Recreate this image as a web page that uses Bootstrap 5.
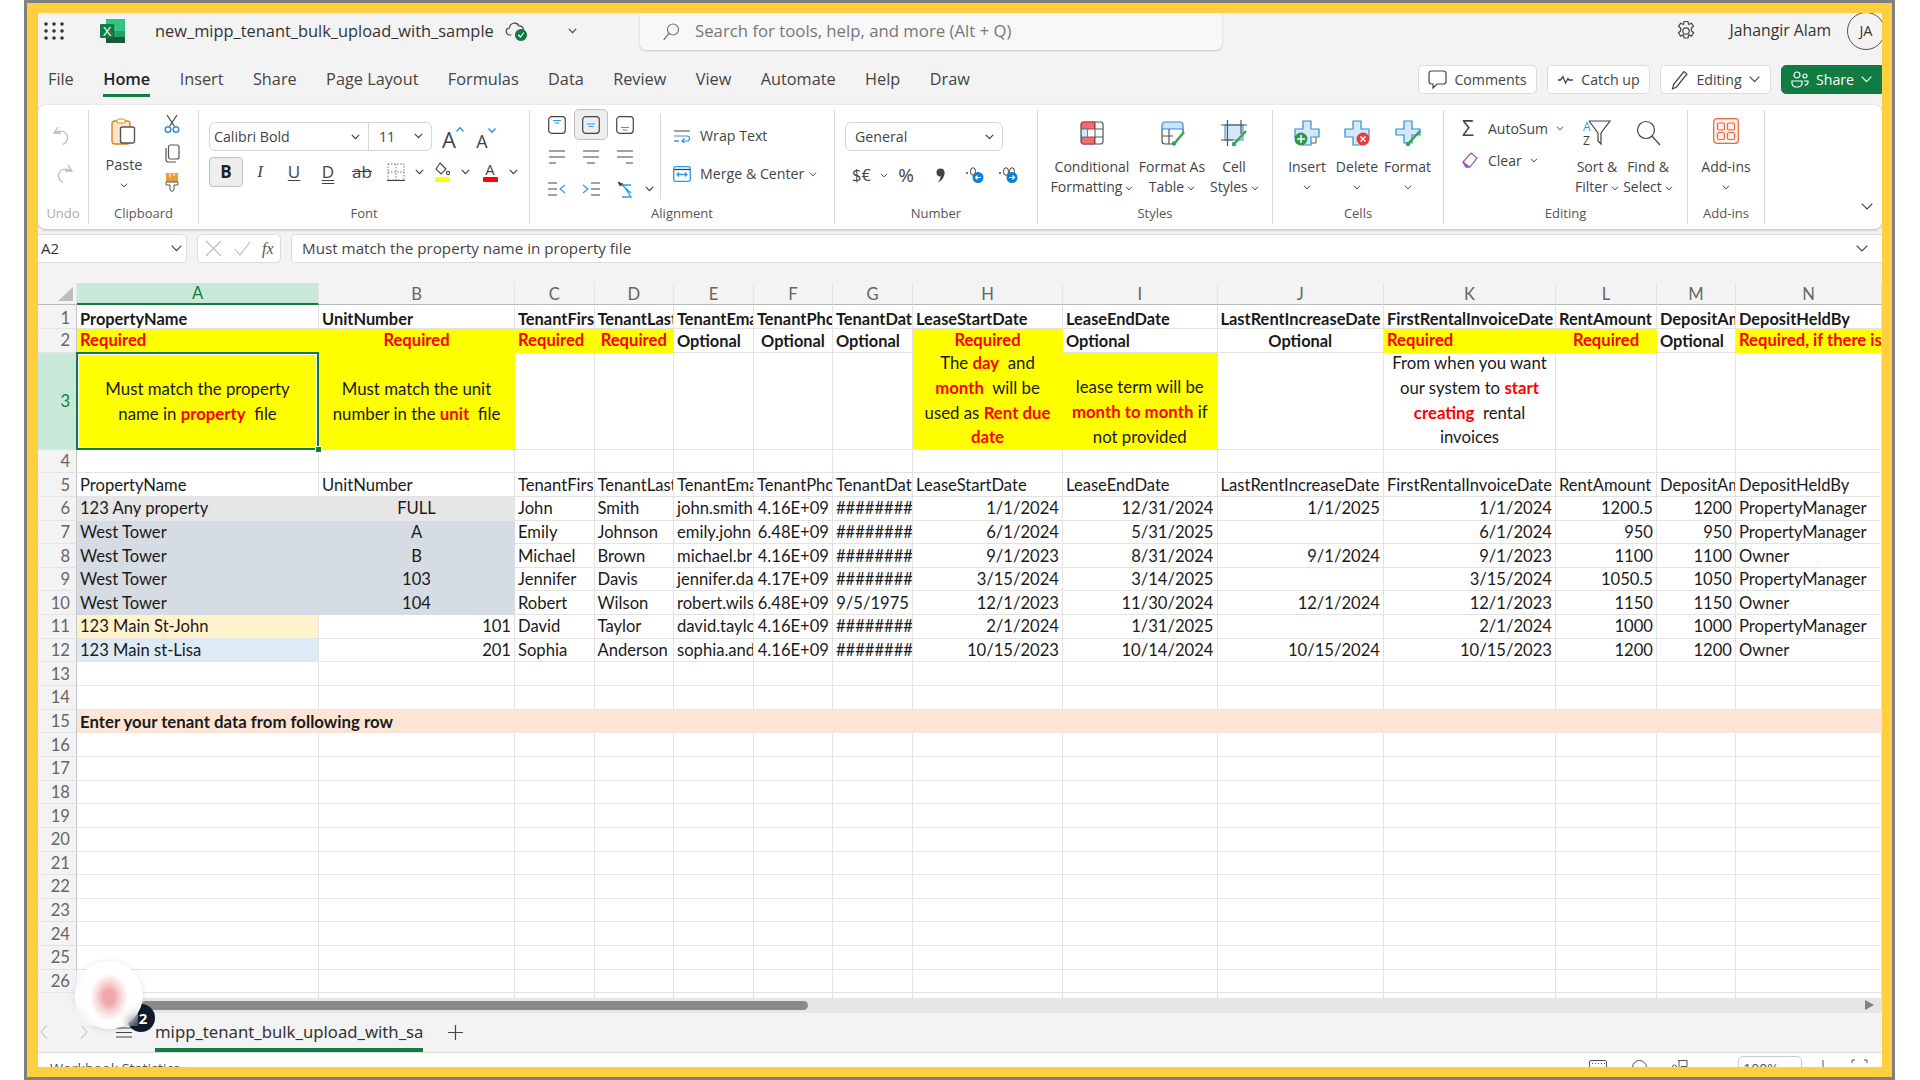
<!DOCTYPE html>
<html lang="en">
<head>
<meta charset="utf-8">
<title>new_mipp_tenant_bulk_upload_with_sample</title>
<link href="https://cdn.jsdelivr.net/npm/bootstrap@5.3.0/dist/css/bootstrap.min.css" rel="stylesheet">
<style>
html,body{margin:0;background:#fff;height:1080px;overflow:hidden}
body{font-family:"Open Sans","Noto Sans",sans-serif;color:#333;font-size:14px}
.shot{margin-left:24px;width:1871px;height:1080px;border:3px solid #808080;border-bottom-width:3px}
.frame{height:100%;border:10px solid #ffcf3f;border-left-width:11px;border-right-width:10px;overflow:hidden;position:relative;background:#f3f3f3}
svg{display:block;flex:none;overflow:visible}
.st{fill:none;stroke:#444;stroke-width:1.2;stroke-linecap:round;stroke-linejoin:round}
.chev{width:9px;height:6px;fill:none;stroke:#444;stroke-width:1.2}
/* title bar */
.titlebar{height:39px;padding-bottom:3px}
.waffle{width:20px;height:18px;margin-left:6px;margin-right:36px}
.doc-title{font-size:16.4px;margin-left:30px;color:#333;white-space:nowrap;width:351px}
.searchbox{margin-left:63px;width:582px;height:37px;background:#f8f8f8;border-radius:0 0 6px 6px;box-shadow:0 1px 2px rgba(0,0,0,.2);padding-left:22px;color:#777;font-size:16.75px;gap:14px}
.user{margin-left:auto;gap:0}
.user-name{font-size:15.75px;margin-left:33px;margin-right:16px;white-space:nowrap}
.avatar{width:38px;height:38px;border:1px solid #555;border-radius:50%;margin-right:-3px;font-size:14.5px}
/* tabs */
.tabrow{height:53px;padding-top:13px}
.tabs{gap:29.4px;margin-left:10px}
.tabs span{display:block;height:32px;line-height:29px;font-size:16.3px;color:#444;border-bottom:3px solid transparent;white-space:nowrap}
.tabs span.on{color:#222;font-weight:600;border-color:#107c41}
.act{height:29px;background:#fff;border:1px solid #dcdcdc;border-radius:5px;font-size:14.2px;color:#444;gap:7px;padding:0;margin-left:10px}
.act svg{stroke:#444}
.w1{width:119px}.w2{width:103px}.w3{width:111px}.w4{width:101px;background:#107c41;border-color:#107c41;color:#fff;border-radius:5px 0 0 5px}
.w4 svg{stroke:#fff}
/* ribbon */
.ribbon{height:124px;background:#fff;border-radius:8px;box-shadow:0 1px 3px rgba(0,0,0,.25);padding:5px 0}
.grp{height:114px;border-right:1px solid #dadada;flex:none}
.g1{width:51px}.g2{width:110px}.g3{width:331px}.g4{width:305px}.g5{width:203px}.g6{width:235px}.g7{width:171px}.g8{width:244px}.g9{width:77px}
.gbody{height:92px}
.g3 .gbody,.g4 .gbody,.g5 .gbody{padding-left:10px}
.g6 .gbody{padding-left:12px}
.g7 .gbody{padding-left:9px}
.g8 .gbody{padding-left:18px}
.glabel{height:22px;line-height:22px;text-align:center;font-size:13px;color:#555}
.big{flex:none;font-size:14px;line-height:20px;text-align:center;color:#444;padding-top:10px;white-space:nowrap}
.big svg.main{margin:0 auto 11px;width:28px;height:26px}
.big .chev{display:inline-block;width:8px;height:5px;margin-left:3px;vertical-align:middle}
.big .chev.solo{display:block;margin:8px auto 0}
.combo{height:29px;border:1px solid #d6d6d6;border-radius:6px;background:#fff;font-size:14.2px;color:#444}
.fontcombo{width:223px;margin-top:12px}
.fontcombo .fn{width:159px;padding:0 8px 0 4px;border-right:1px solid #d6d6d6;height:100%}
.fontcombo .fs{flex:1;padding:0 8px 0 10px}
.numcombo{width:158px;margin-top:12px;padding:0 8px 0 9px}
.tb{width:34px;height:30px;font-size:17px;color:#444;flex:none}
.tb.on{background:#eee;border:1px solid #c0c0c0;border-radius:4px;font-weight:700;color:#222}
.t12{width:12px}.t30{width:30px;margin-left:3px}.t14{width:14px}.t36{width:36px}.t10{width:10px}
.i{font-style:italic;font-family:"Liberation Serif",serif}
.u{text-decoration:underline;text-underline-offset:2px}
.dbl{text-decoration:underline double;text-underline-offset:2px}
.s{text-decoration:line-through}
.sized{height:29px;font-size:22px;color:#444;line-height:1;margin-top:11px}
.s1{width:34px}
.s2{width:32px;font-size:18px}
.al{display:grid;grid-template-columns:34px 34px 34px 14px;grid-auto-rows:32px;margin-top:-1px;width:116px;align-content:start}
.al>div{display:flex;align-items:center;justify-content:center}
.al .on{background:#eee;border:1px solid #c0c0c0;border-radius:5px;height:31px}
.vsep{width:1px;height:85px;background:#dadada;margin:4px 12px 0 4px;flex:none}
.wrap-col{font-size:14.2px;color:#444;padding-top:14px;gap:14px}
.wrap-col>div{height:24px;gap:9px}
.numrow{height:24px;margin-top:12px;margin-left:3px;font-size:16.5px;color:#444}
.numrow>div{display:flex;align-items:center;justify-content:center;flex:none}
.small-col{width:109px;padding-top:6px;gap:8px;font-size:14px;color:#444}
.small-col>div{height:24px}
.small-col .sic{width:26px;font-size:21px;line-height:1}
.expand{margin-left:auto;align-self:flex-end;margin-right:9px;margin-bottom:14px}
/* formula */
.fxrow{height:29px;margin-top:5px;gap:10px}
.namebox{width:149px;background:#fff;border:1px solid #dcdcdc;border-radius:0 5px 5px 0;padding:0 4px 0 3px;font-size:15px;border-left:0}
.fnbox{width:84px;background:#fff;border:1px solid #dcdcdc;border-radius:5px;color:#999;font-family:"Liberation Serif",serif;font-style:italic;font-size:16px;gap:12px;padding-left:7px}
.fbar{flex:1;background:#fff;border:1px solid #dcdcdc;border-right:0;padding:0 10px;font-size:15.2px;color:#444;border-radius:5px 0 0 5px}
.gap20{height:20px}
/* sheet */
.sheet{width:1844px;table-layout:fixed;border-collapse:separate;border-spacing:0;margin:0;--bs-table-bg:#fff;font-family:Lato,"Liberation Sans",sans-serif;font-size:16.6px;color:#1a1a1a}
.sheet col:nth-child(1){width:39px}.sheet col:nth-child(2){width:242px}.sheet col:nth-child(3){width:196px}.sheet col:nth-child(4){width:79.5px}.sheet col:nth-child(5){width:79.5px}.sheet col:nth-child(6){width:80px}.sheet col:nth-child(7){width:79px}.sheet col:nth-child(8){width:80px}.sheet col:nth-child(9){width:150px}.sheet col:nth-child(10){width:154.5px}.sheet col:nth-child(11){width:166.5px}.sheet col:nth-child(12){width:172px}.sheet col:nth-child(13){width:101px}.sheet col:nth-child(14){width:79px}.sheet col:nth-child(15){width:146px}
.sheet tr{height:23.65px}
.sheet tr.hdr{height:22px}
.sheet tr.r1{height:24px}
.sheet td,.sheet th{padding:1px 3px 0;line-height:19px;border:0;border-right:1px solid #e3e3e3;border-bottom:1px solid #e3e3e3;overflow:hidden;white-space:nowrap;vertical-align:middle;font-weight:400}
.sheet tr.r1 td,.sheet tr.r1 th{padding-top:3px}
.sheet tr.r3{height:96.6px}
.sheet tr.r27{height:4.5px}
.sheet thead th{background:#f3f3f3;color:#666;text-align:center;border-bottom:1px solid #b9b9b9;border-right:1px solid #e3e3e3}
.sheet thead th.sel{background:#c9e9d8;color:#107c41;border-bottom:2px solid #107c41}
.sheet tbody th{background:#f3f3f3;color:#666;text-align:right;padding-right:6px;border-right:1px solid #c6c6c6}
.sheet tbody th.sel{background:#c9e9d8;color:#107c41}
.sheet tr.r27 th,.sheet tr.r27 td{line-height:0;border-bottom:0;padding:0}
.sheet td.y{background:#ff0;border-color:#ff0}
.sheet td.g{background:#e6e6e6;border-color:#e6e6e6}
.sheet td.b{background:#d6dce4;border-color:#d6dce4}
.sheet td.o{background:#fff2cc}
.sheet td.l{background:#ddebf7}
.sheet td.p{background:#fce4d6;border-color:#fce4d6;font-size:16.8px}
.sheet .rq{color:#f00;font-weight:700}
.sheet .bd{font-weight:700;font-size:16.4px}
.sheet td.tallc{padding:0;overflow:visible}
.tall{height:96px;line-height:24.8px;overflow:hidden;white-space:nowrap;text-align:center;padding:0 3px;font-size:16.8px}
.lower>span{padding-top:2px}
.lowest>span{margin-bottom:-1px}
.sheet td.sel{position:relative;overflow:visible}
.selbox{position:absolute;inset:-1px -1px -1px -1px;border:2px solid #107c41;box-shadow:inset 0 0 0 1px #fff;pointer-events:none}
.handle{position:absolute;right:-4px;bottom:-4px;width:7px;height:7px;background:#107c41;border:1px solid #fff}
/* bottom */
.hscroll{height:15px}
.hscroll .corner{width:39px;background:#f3f3f3}
.hscroll .track{flex:1;background:#e6e6e6;padding:3px 8px 3px 64px}
.thumb{width:667px;height:9px;background:#8a8a8a;border-radius:5px}
.sheetbar{height:40px;background:#f3f3f3;border-bottom:1px solid #ddd;padding-left:2px}
.sheettab{margin-left:23px;height:40px;width:268px;border-bottom:4px solid #107c41;line-height:40px;font-family:"Noto Sans",sans-serif;font-size:16.7px;color:#333;white-space:nowrap;overflow:hidden;text-align:center}
.status{height:32px;background:#fff;font-size:14.2px;color:#555;padding-left:12px;padding-top:5px}
.status svg{margin-top:2px}
.zoombox{width:64px;height:26px;border:1px solid #ccc;border-radius:5px;font-size:14px;margin-top:-2px}
.avatarblur{position:absolute;left:37px;top:948px;width:68px;height:68px;border-radius:50%;background:#fff;opacity:.97;box-shadow:0 1px 6px rgba(0,0,0,.12)}
.badge2{position:absolute;left:89px;top:991px;width:28px;height:28px;border-radius:50%;background:#0f1a2c;color:#fff;font-weight:700;font-size:15px;padding:0 0 0 4px}
.blursq{position:absolute;left:37px;top:958px;width:63px;height:55px;backdrop-filter:blur(5px);background:rgba(255,255,255,.2)}
.pink{position:absolute;left:52px;top:960px;width:38px;height:48px;border-radius:50%;background:radial-gradient(closest-side,#efa9ab 30%,rgba(240,180,182,.5) 65%,rgba(255,255,255,0))}
</style>
</head>
<body>
<svg width="0" height="0" style="position:absolute">
<symbol id="chev" viewBox="0 0 9 6"><path d="M.8.8l3.7 3.9L8.2.8"/></symbol>
</svg>
<div class="shot"><div class="frame">

<div class="titlebar d-flex align-items-center">
  <svg class="waffle" viewBox="0 0 20 18" fill="#333"><circle cx="2" cy="2" r="1.8"/><circle cx="10" cy="2" r="1.8"/><circle cx="18" cy="2" r="1.8"/><circle cx="2" cy="9" r="1.8"/><circle cx="10" cy="9" r="1.8"/><circle cx="18" cy="9" r="1.8"/><circle cx="2" cy="16" r="1.8"/><circle cx="10" cy="16" r="1.8"/><circle cx="18" cy="16" r="1.8"/></svg>
  <svg width="25" height="24" viewBox="0 0 25 24"><rect x="6" y="0" width="19" height="6" fill="#33c481"/><rect x="6" y="6" width="9.500" height="6" fill="#21a366"/><rect x="15.500" y="6" width="9.500" height="6" fill="#33c481"/><rect x="6" y="12" width="9.500" height="6" fill="#107c41"/><rect x="15.500" y="12" width="9.500" height="6" fill="#21a366"/><rect x="6" y="18" width="19" height="6" fill="#185c37"/><rect x="0" y="5" width="14" height="14" rx="1" fill="#107c41"/><text x="7" y="16.500" text-anchor="middle" font-family="Liberation Sans" font-size="13" fill="#fff">X</text></svg>
  <div class="doc-title">new_mipp_tenant_bulk_upload_with_sample</div>
  <svg width="22" height="20" viewBox="0 0 22 20" class="st"><path d="M5 14H4a3.500 3.500 0 0 1-.5-7 5 5 0 0 1 9.500-2 4 4 0 0 1 4.500 4"/><circle cx="15" cy="14" r="5.500" fill="#107c41" stroke="#107c41"/><path d="M12.500 14l2 2 3-4" stroke="#fff"/></svg>
  <svg class="chev" viewBox="0 0 9 6" style="margin-left:40px"><use href="#chev"/></svg>
  <div class="searchbox d-flex align-items-center">
    <svg width="19" height="17" viewBox="0 0 19 17" class="st"><circle cx="11" cy="6.500" r="5.500" stroke="#777"/><path d="M7 10.500l-5 6" stroke="#777"/></svg>
    <span>Search for tools, help, and more (Alt + Q)</span>
  </div>
  <div class="user d-flex align-items-center">
    <svg width="22" height="22" viewBox="0 0 22 22" class="st"><circle cx="11" cy="11" r="3.200"/><path d="M9 1.500h4l.6 3 2.700-1.300 2.200 3-2.200 2 .1 2.600 2.200 2-2.100 3.300-2.800-1.200-.7 3.100H9l-.6-3.100-2.800 1.200-2.100-3.300 2.200-2 .1-2.600-2.200-2 2.200-3 2.700 1.300z"/></svg>
    <span class="user-name">Jahangir Alam</span>
    <div class="avatar d-flex align-items-center justify-content-center">JA</div>
  </div>
</div>

<div class="tabrow d-flex align-items-start">
  <div class="tabs d-flex">
    <span>File</span><span class="on">Home</span><span>Insert</span><span>Share</span><span>Page Layout</span><span>Formulas</span><span>Data</span><span>Review</span><span>View</span><span>Automate</span><span>Help</span><span>Draw</span>
  </div>
  <div class="ms-auto d-flex">
    <button class="btn act w1 d-flex align-items-center justify-content-center"><svg width="19" height="19" viewBox="0 0 19 19" fill="none" stroke-width="1.2"><path d="M3.500 1h12a2.500 2.500 0 0 1 2.500 2.500v8a2.500 2.500 0 0 1-2.500 2.500H9l-4 4v-4H3.500A2.500 2.500 0 0 1 1 11.500v-8A2.500 2.500 0 0 1 3.500 1z"/></svg>Comments</button>
    <button class="btn act w2 d-flex align-items-center justify-content-center"><svg width="17" height="10" viewBox="0 0 17 10" fill="none" stroke-width="1.300"><path d="M1 5h2.500L6 1.500 8.500 8 11 3.500l1 1.500h4"/></svg>Catch up</button>
    <button class="btn act w3 d-flex align-items-center justify-content-center"><svg width="18" height="20" viewBox="0 0 18 20" fill="none" stroke-width="1.200"><path d="M2.500 14.500L13 1.500l3 2.500L5.500 17 1.500 19z"/></svg>Editing<svg width="11" height="7" viewBox="0 0 11 7" fill="none" stroke-width="1.200"><path d="M.7.7l4.800 5 4.800-5"/></svg></button>
    <button class="btn act w4 d-flex align-items-center justify-content-center"><svg width="18" height="17" viewBox="0 0 18 17" fill="none" stroke-width="1.200"><circle cx="6" cy="4" r="3"/><circle cx="14" cy="5" r="2"/><path d="M1 10h10v2a4 4 0 0 1-4 4H5a4 4 0 0 1-4-4zM13 10h4v1a3 3 0 0 1-3.500 3"/></svg>Share<svg width="11" height="7" viewBox="0 0 11 7" fill="none" stroke-width="1.200"><path d="M.7.7l4.800 5 4.800-5"/></svg></button>
  </div>
</div>

<div class="ribbon d-flex">
  <div class="grp g1 d-flex flex-column">
    <div class="gbody d-flex flex-column align-items-center" >
      <svg width="22" height="20" viewBox="0 0 22 20" fill="none" stroke="#bbb" stroke-width="1.300" style="margin-top:16px"><path d="M6 1L2 7l7 0M2.500 7c5-3.500 13-2 13 4.500 0 3-2 5.500-4.500 7"/></svg>
      <svg width="22" height="20" viewBox="0 0 22 20" fill="none" stroke="#bbb" stroke-width="1.300" style="margin-top:18px"><path d="M16 1l4 6-7 0M19.500 7c-5-3.500-13-2-13 4.500 0 3 2 5.500 4.500 7"/></svg>
    </div>
    <div class="glabel" style="color:#aaa">Undo</div>
  </div>
  <div class="grp g2 d-flex flex-column">
    <div class="gbody d-flex">
      <div class="big" style="width:70px;padding-top:8px">
        <svg class="main" style="width:26px;height:27px;margin-bottom:10px" viewBox="0 0 26 27" fill="none"><rect x="1" y="3" width="18" height="23" rx="3" fill="#fde5c8" stroke="#d9822b" stroke-width="1.400"/><rect x="6" y="1" width="8" height="4" rx="1.500" fill="#fff" stroke="#d9822b"/><rect x="9.500" y="9" width="14" height="16" rx="2" fill="#fff" stroke="#555" stroke-width="1.400"/></svg>
        <div style="font-size:14.5px">Paste</div>
        <svg class="chev solo" viewBox="0 0 9 6"><use href="#chev"/></svg>
      </div>
      <div class="d-flex flex-column align-items-center" style="width:24px;padding-top:5px;margin-left:1px;gap:11px">
        <svg width="16" height="18" viewBox="0 0 16 18" fill="none" stroke-width="1.200"><path d="M3 0l7.500 11.500M13 0L5.500 11.500" stroke="#444"/><circle cx="4" cy="14.500" r="2.800" stroke="#2e8fd6" stroke-width="1.500"/><circle cx="12" cy="14.500" r="2.800" stroke="#2e8fd6" stroke-width="1.500"/></svg>
        <svg width="15" height="19" viewBox="0 0 15 19" fill="none" stroke="#555" stroke-width="1.200"><rect x="3.500" y="1" width="10.500" height="14" rx="2"/><path d="M1 4v11.500A2.500 2.500 0 0 0 3.500 18H11"/></svg>
        <svg width="14" height="20" viewBox="0 0 14 20" style="margin-top:-2px"><path d="M1 1h12v9H1z" fill="#ed9a3b"/><path d="M5 1v4M9 1v3" stroke="#fff"/><path d="M1 10h12v3H9v5l-2 1.500L5 18v-5H1z" fill="#fff" stroke="#555"/></svg>
      </div>
    </div>
    <div class="glabel">Clipboard</div>
  </div>
  <div class="grp g3 d-flex flex-column">
    <div class="gbody">
      <div class="d-flex">
        <div class="combo fontcombo d-flex align-items-center">
          <div class="fn d-flex align-items-center justify-content-between">Calibri Bold<svg class="chev" viewBox="0 0 9 6"><use href="#chev"/></svg></div>
          <div class="fs d-flex align-items-center justify-content-between">11<svg class="chev" viewBox="0 0 9 6"><use href="#chev"/></svg></div>
        </div>
        <div class="sized s1 d-flex align-items-end justify-content-center">A<svg width="8" height="5" viewBox="0 0 8 5" fill="none" stroke="#2e8fd6" stroke-width="1.300" style="margin:0 -8px 18px 0"><path d="M.5 4.500L4 .8l3.500 3.700"/></svg></div>
        <div class="sized s2 d-flex align-items-end justify-content-center">A<svg width="8" height="5" viewBox="0 0 8 5" fill="none" stroke="#2e8fd6" stroke-width="1.300" style="margin:0 -8px 17px 0"><path d="M.5.500L4 4.200 7.500.500"/></svg></div>
      </div>
      <div class="d-flex align-items-center" style="margin-top:6px">
        <div class="tb on d-flex align-items-center justify-content-center">B</div>
        <div class="tb d-flex align-items-center justify-content-center"><span class="i">I</span></div>
        <div class="tb d-flex align-items-center justify-content-center"><span class="u">U</span></div>
        <div class="tb d-flex align-items-center justify-content-center"><span class="dbl">D</span></div>
        <div class="tb d-flex align-items-center justify-content-center"><span class="s">ab</span></div>
        <div class="tb d-flex align-items-center justify-content-center"><svg width="18" height="18" viewBox="0 0 18 18" fill="none" stroke="#777" stroke-dasharray="1.500 1.500"><path d="M1 1h16v16H1zM9 1v16M1 9h16"/><path d="M0 17.500h18" stroke="#444" stroke-dasharray="none"/></svg></div>
        <div class="tb t12 d-flex align-items-center justify-content-center"><svg class="chev" viewBox="0 0 9 6"><use href="#chev"/></svg></div>
        <div class="tb t30 d-flex align-items-center justify-content-center"><svg width="18" height="20" viewBox="0 0 18 20" fill="none" stroke="#444" stroke-width="1.100"><path d="M6 1l6 6-5 5-5-5z"/><circle cx="14" cy="11" r="1.600"/><rect x="1" y="15" width="15" height="5" rx="1.500" fill="#ff0" stroke="none"/></svg></div>
        <div class="tb t14 d-flex align-items-center justify-content-center"><svg class="chev" viewBox="0 0 9 6"><use href="#chev"/></svg></div>
        <div class="tb t36 d-flex flex-column align-items-center justify-content-center" style="font-size:15px;line-height:15px">A<div style="width:15px;height:5px;background:#f00;border-radius:1px"></div></div>
        <div class="tb t10 d-flex align-items-center justify-content-center"><svg class="chev" viewBox="0 0 9 6"><use href="#chev"/></svg></div>
      </div>
    </div>
    <div class="glabel">Font</div>
  </div>
  <div class="grp g4 d-flex flex-column">
    <div class="gbody d-flex">
      <div class="al">
        <div><svg width="18" height="18" viewBox="0 0 18 18" fill="none" stroke="#444" stroke-width="1.200"><rect x=".7" y=".7" width="16.600" height="16.600" rx="3"/><path d="M5 4.500h8M6.500 7h5" stroke="#2e9be0"/></svg></div>
        <div class="on"><svg width="18" height="18" viewBox="0 0 18 18" fill="none" stroke="#444" stroke-width="1.200"><rect x=".7" y=".7" width="16.600" height="16.600" rx="3"/><path d="M5 8h8M6.500 10.500h5" stroke="#2e9be0"/></svg></div>
        <div><svg width="18" height="18" viewBox="0 0 18 18" fill="none" stroke="#444" stroke-width="1.200"><rect x=".7" y=".7" width="16.600" height="16.600" rx="3"/><path d="M5 11.500h8M6.500 14h5" stroke="#2e9be0"/></svg></div>
        <div></div>
        <div><svg width="16" height="14" viewBox="0 0 16 14" stroke="#444" stroke-width="1.200"><path d="M0 1h16M0 7h16M0 13h7"/></svg></div>
        <div><svg width="16" height="14" viewBox="0 0 16 14" stroke="#444" stroke-width="1.200"><path d="M0 1h16M0 7h16M4 13h8"/></svg></div>
        <div><svg width="16" height="14" viewBox="0 0 16 14" stroke="#444" stroke-width="1.200"><path d="M0 1h16M0 7h16M9 13h7"/></svg></div>
        <div></div>
        <div><svg width="18" height="14" viewBox="0 0 18 14" fill="none" stroke="#444" stroke-width="1.200"><path d="M0 1h9M0 7h9M0 13h9"/><path d="M17 3l-5 4 5 4" stroke="#2e9be0"/></svg></div>
        <div><svg width="18" height="14" viewBox="0 0 18 14" fill="none" stroke="#444" stroke-width="1.200"><path d="M9 1h9M9 7h9M9 13h9"/><path d="M1 3l5 4-5 4" stroke="#2e9be0"/></svg></div>
        <div><svg width="16" height="17" viewBox="0 0 16 17" fill="none" stroke="#2e9be0" stroke-width="1.300"><path d="M5 4l9 8M14 4l-8 0 8 12H5"/><path d="M1 1l5 2-3 2z" fill="#444" stroke="#444" stroke-width=".8"/></svg></div>
        <div><svg class="chev" viewBox="0 0 9 6"><use href="#chev"/></svg></div>
      </div>
      <div class="vsep"></div>
      <div class="wrap-col d-flex flex-column">
        <div class="d-flex align-items-center"><svg width="18" height="13" viewBox="0 0 16 13" fill="none" stroke-width="1.200"><path d="M0 1h16M0 11h5" stroke="#444"/><path d="M0 6h13a2.500 2.500 0 0 1 0 5H8m2.500-2.500L8 11l2.500 2" stroke="#2e9be0"/></svg>Wrap Text</div>
        <div class="d-flex align-items-center"><svg width="18" height="16" viewBox="0 0 18 16" fill="none" stroke-width="1.300"><rect x=".7" y=".7" width="16.600" height="14.600" rx="2" stroke="#2e9be0"/><path d="M1 3.500h16" stroke="#444"/><path d="M4 8.500h10M6 6.500l-2 2 2 2M12 6.500l2 2-2 2" stroke="#2e9be0"/></svg>Merge &amp; Center<svg class="chev" style="width:8px;height:5px;margin-left:-4px" viewBox="0 0 9 6"><use href="#chev"/></svg></div>
      </div>
    </div>
    <div class="glabel">Alignment</div>
  </div>
  <div class="grp g5 d-flex flex-column">
    <div class="gbody">
      <div class="combo numcombo d-flex align-items-center justify-content-between">General<svg class="chev" viewBox="0 0 9 6"><use href="#chev"/></svg></div>
      <div class="numrow d-flex">
        <div style="width:27px">$€</div>
        <div style="width:17px"><svg class="chev" style="width:8px;height:5px" viewBox="0 0 9 6"><use href="#chev"/></svg></div>
        <div style="width:28px;font-size:19px">%</div>
        <div style="width:40px"><svg width="9" height="15" viewBox="0 0 9 15" fill="#444"><circle cx="4.500" cy="4.500" r="4"/><path d="M8.500 4.500C8.500 9 6 13 1.500 14.500 4 12 4.500 10 4.500 8.500z"/></svg></div>
        <div style="width:30px"><svg width="19" height="16" viewBox="0 0 19 16"><circle cx="1" cy="6" r="1" fill="#444"/><ellipse cx="7" cy="4.500" rx="2.500" ry="3.800" fill="none" stroke="#444"/><circle cx="12" cy="10.500" r="5.500" fill="#0f7fcf"/><path d="M15 10.500H9.500m2-2l-2 2 2 2" fill="none" stroke="#fff" stroke-width="1.200"/></svg></div>
        <div style="width:38px"><svg width="20" height="16" viewBox="0 0 20 16"><circle cx="1" cy="6" r="1" fill="#444"/><ellipse cx="7" cy="4.500" rx="2.500" ry="3.800" fill="none" stroke="#444"/><ellipse cx="13" cy="4.500" rx="2.500" ry="3.800" fill="none" stroke="#444"/><circle cx="13" cy="10.500" r="5.500" fill="#0f7fcf"/><path d="M10 10.500h5.500m-2-2l2 2-2 2" fill="none" stroke="#fff" stroke-width="1.200"/></svg></div>
      </div>
    </div>
    <div class="glabel">Number</div>
  </div>
  <div class="grp g6 d-flex flex-column">
    <div class="gbody d-flex">
      <div class="big" style="width:84px">
        <svg class="main" viewBox="0 0 28 26" fill="none"><rect x="3" y="2" width="22" height="22" rx="2.500" stroke="#555" stroke-width="1.200"/><path d="M5.500 2h11v7h-13V4.500A2.500 2.500 0 0 1 5.500 2z" fill="#f26d6d" stroke="#c8373a"/><path d="M3.500 17h13v7h-11a2.500 2.500 0 0 1-2-2.500z" fill="#f26d6d" stroke="#c8373a"/><rect x="3.500" y="9" width="6" height="8" fill="#d5e8f8" stroke="#2e8fd6"/><path d="M17 2v22M17 9h8M17 17h8" stroke="#555"/></svg>
        Conditional<br>Formatting<svg class="chev" viewBox="0 0 9 6"><use href="#chev"/></svg>
      </div>
      <div class="big" style="width:76px">
        <svg class="main" viewBox="0 0 28 26" fill="none"><path d="M4 8V5a3 3 0 0 1 3-3h15a3 3 0 0 1 3 3v4H4z" fill="#cde3f6" stroke="#2e8fd6" stroke-width="1.200"/><path d="M4 9v12a3 3 0 0 0 3 3h8M11 9v15M4 16h11M25 9v3" stroke="#555" stroke-width="1.200"/><path d="M16 24l10-12" stroke="#2fa84f" stroke-width="2.500"/><circle cx="16" cy="23.500" r="2.200" fill="#2fa84f"/></svg>
        Format As<br>Table<svg class="chev" viewBox="0 0 9 6"><use href="#chev"/></svg>
      </div>
      <div class="big" style="width:48px">
        <svg class="main" viewBox="0 0 28 26" fill="none"><rect x="5" y="5" width="18" height="15" fill="#d5e8f8" stroke="#2e8fd6"/><path d="M7.500 0v26M21 0v14M1 5h26M1 20h12" stroke="#555" stroke-width="1.200"/><path d="M14 24l12-13" stroke="#2fa84f" stroke-width="2.500"/><circle cx="14" cy="24" r="2.200" fill="#2fa84f"/></svg>
        Cell<br>Styles<svg class="chev" viewBox="0 0 9 6"><use href="#chev"/></svg>
      </div>
    </div>
    <div class="glabel">Styles</div>
  </div>
  <div class="grp g7 d-flex flex-column">
    <div class="gbody d-flex">
      <div class="big" style="width:50px">
        <svg class="main" viewBox="0 0 28 26" fill="none"><path d="M3 14v9h20v-9" stroke="#555"/><path d="M10 1h8v8h8v8h-8v8h-8v-8H2V9h8z" fill="#d5e8f8" stroke="#2e8fd6" stroke-width="1.200"/><circle cx="8" cy="19" r="6.500" fill="#2b9a4e"/><path d="M8 15v8M4 19h8" stroke="#fff" stroke-width="1.500"/></svg>
        Insert<svg class="chev solo" viewBox="0 0 9 6"><use href="#chev"/></svg>
      </div>
      <div class="big" style="width:50px">
        <svg class="main" viewBox="0 0 28 26" fill="none"><path d="M10 1h8v8h8v8h-8v8h-8v-8H2V9h8z" fill="#d5e8f8" stroke="#2e8fd6" stroke-width="1.200"/><circle cx="20" cy="19" r="6.500" fill="#e83c3c"/><path d="M17.500 16.500l5 5m0-5l-5 5" stroke="#fff" stroke-width="1.400"/></svg>
        Delete<svg class="chev solo" viewBox="0 0 9 6"><use href="#chev"/></svg>
      </div>
      <div class="big" style="width:51px">
        <svg class="main" viewBox="0 0 28 26" fill="none"><path d="M10 1h8v8h8v6H18v8h-8v-8H2V9h8z" fill="#d5e8f8" stroke="#2e8fd6" stroke-width="1.200"/><path d="M14 24l12-13" stroke="#2fa84f" stroke-width="2.500"/><circle cx="14" cy="24" r="2.200" fill="#2fa84f"/></svg>
        Format<svg class="chev solo" viewBox="0 0 9 6"><use href="#chev"/></svg>
      </div>
    </div>
    <div class="glabel">Cells</div>
  </div>
  <div class="grp g8 d-flex flex-column">
    <div class="gbody d-flex">
      <div class="small-col d-flex flex-column">
        <div class="d-flex align-items-center"><span class="sic">Σ</span>AutoSum<svg class="chev ms-2" style="width:8px;height:5px" viewBox="0 0 9 6"><use href="#chev"/></svg></div>
        <div class="d-flex align-items-center"><span class="sic"><svg width="16" height="16" viewBox="0 0 16 16" fill="none" stroke="#9c4fb5" stroke-width="1.200"><path d="M1 10l8-9 6 5-7 9H4z"/><path d="M1 10l6 5" /><path d="M1.500 10.500L5 14l3 1H4z" fill="#c57bd8"/></svg></span>Clear<svg class="chev ms-2" style="width:8px;height:5px" viewBox="0 0 9 6"><use href="#chev"/></svg></div>
      </div>
      <div class="big" style="width:52px">
        <svg class="main" style="width:28px;height:26px" viewBox="0 0 28 26" fill="none"><text x="0" y="11" font-size="12" font-family="Open Sans" fill="#2e9be0">A</text><text x="0" y="25" font-size="12" font-family="Open Sans" fill="#444">Z</text><path d="M6 1h21L18 13v11l-3-3v-8L6 1" stroke="#444" stroke-width="1.200"/></svg>
        Sort &amp;<br>Filter<svg class="chev" viewBox="0 0 9 6"><use href="#chev"/></svg>
      </div>
      <div class="big" style="width:50px">
        <svg class="main" viewBox="0 0 28 26" fill="none" stroke="#444" stroke-width="1.200"><circle cx="12" cy="10" r="8.500"/><path d="M18 16l8 9"/></svg>
        Find &amp;<br>Select<svg class="chev" viewBox="0 0 9 6"><use href="#chev"/></svg>
      </div>
    </div>
    <div class="glabel">Editing</div>
  </div>
  <div class="grp g9 d-flex flex-column">
    <div class="gbody d-flex justify-content-center">
      <div class="big" style="padding-top:8px">
        <svg class="main" style="width:26px;height:26px;margin-bottom:13px" viewBox="0 0 26 26" fill="none" stroke="#e8663c" stroke-width="1.200"><rect x=".7" y=".7" width="24.600" height="24.600" rx="3" fill="#fdf0ea"/><rect x="4.500" y="5" width="7" height="7" rx="1.500"/><rect x="14.500" y="5" width="7" height="7" rx="1.500"/><rect x="4.500" y="14.500" width="7" height="7" rx="1.500"/><rect x="14.500" y="14.500" width="7" height="7" rx="1.500"/></svg>
        Add-ins<svg class="chev solo" viewBox="0 0 9 6"><use href="#chev"/></svg>
      </div>
    </div>
    <div class="glabel">Add-ins</div>
  </div>
  <svg class="expand" width="12" height="7" viewBox="0 0 12 7" fill="none" stroke="#444" stroke-width="1.200"><path d="M.7.7L6 6l5.300-5.300"/></svg>
</div>

<div class="fxrow d-flex">
  <div class="namebox d-flex align-items-center justify-content-between">A2<svg width="11" height="7" viewBox="0 0 11 7" fill="none" stroke="#444" stroke-width="1.200"><path d="M.7.7l4.800 5 4.800-5"/></svg></div>
  <div class="fnbox d-flex align-items-center">
    <svg width="17" height="17" viewBox="0 0 17 17" stroke="#bbb" stroke-width="1.100"><path d="M1 1l15 15M16 1L1 16"/></svg>
    <svg width="17" height="15" viewBox="0 0 17 15" stroke="#bbb" stroke-width="1.100" fill="none"><path d="M1 8l5 6L16 1"/></svg>
    <span style="margin-left:-1px;color:#555">fx</span>
  </div>
  <div class="fbar d-flex align-items-center justify-content-between">Must match the property name in property file<svg style="margin-right:4px" width="12" height="7" viewBox="0 0 12 7" fill="none" stroke="#444" stroke-width="1.200"><path d="M.7.7L6 6l5.300-5.300"/></svg></div>
</div>
<div class="gap20"></div>

<table class="table sheet">
<colgroup><col><col><col><col><col><col><col><col><col><col><col><col><col><col><col></colgroup>
<thead>
<tr class="hdr"><th><svg width="16" height="15" viewBox="0 0 16 15" style="margin-left:17px"><path d="M15 0v14H0z" fill="#bdbdbd"/></svg></th><th class="sel">A</th><th>B</th><th>C</th><th>D</th><th>E</th><th>F</th><th>G</th><th>H</th><th>I</th><th>J</th><th>K</th><th>L</th><th>M</th><th>N</th></tr>
</thead>
<tbody>
<tr class="r1"><th>1</th><td class="bd">PropertyName</td><td class="bd">UnitNumber</td><td class="bd">TenantFirs</td><td class="bd">TenantLast</td><td class="bd">TenantEma</td><td class="bd">TenantPho</td><td class="bd">TenantDat</td><td class="bd">LeaseStartDate</td><td class="bd">LeaseEndDate</td><td class="bd">LastRentIncreaseDate</td><td class="bd">FirstRentalInvoiceDate</td><td class="bd">RentAmount</td><td class="bd">DepositAm</td><td class="bd">DepositHeldBy</td></tr>
<tr><th>2</th><td class="y rq">Required</td><td class="y rq text-center">Required</td><td class="y rq">Required</td><td class="y rq text-center">Required</td><td class="bd">Optional</td><td class="bd text-center">Optional</td><td class="bd">Optional</td><td class="y rq text-center">Required</td><td class="bd">Optional</td><td class="bd text-center">Optional</td><td class="y rq">Required</td><td class="y rq text-center">Required</td><td class="bd">Optional</td><td class="y rq">Required, if there is</td></tr>
<tr class="r3"><th class="sel">3</th><td class="y sel tallc"><div class="tall lower d-flex align-items-center justify-content-center"><span>Must match the property<br>name in <span class="rq">property</span>&nbsp; file</span></div><span class="selbox"></span><span class="handle"></span></td><td class="y tallc"><div class="tall lower d-flex align-items-center justify-content-center"><span>Must match the unit<br>number in the <span class="rq">unit</span>&nbsp; file</span></div></td><td></td><td></td><td></td><td></td><td></td><td class="y tallc"><div class="tall d-flex align-items-center justify-content-center"><span>The <span class="rq">day</span>&nbsp; and<br><span class="rq">month</span>&nbsp; will be<br>used as <span class="rq">Rent due</span><br><span class="rq">date</span></span></div></td><td class="y tallc"><div class="tall lowest d-flex align-items-end justify-content-center"><span>lease term will be<br><span class="rq">month to month</span> if<br>not provided</span></div></td><td></td><td class="tallc"><div class="tall d-flex align-items-center justify-content-center"><span>From when you want<br>our system to <span class="rq">start</span><br><span class="rq">creating</span>&nbsp; rental<br>invoices</span></div></td><td></td><td></td><td></td></tr>
<tr><th>4</th><td></td><td></td><td></td><td></td><td></td><td></td><td></td><td></td><td></td><td></td><td></td><td></td><td></td><td></td></tr>
<tr><th>5</th><td>PropertyName</td><td>UnitNumber</td><td>TenantFirs</td><td>TenantLast</td><td>TenantEma</td><td>TenantPho</td><td>TenantDat</td><td>LeaseStartDate</td><td>LeaseEndDate</td><td>LastRentIncreaseDate</td><td>FirstRentalInvoiceDate</td><td>RentAmount</td><td>DepositAm</td><td>DepositHeldBy</td></tr>
<tr><th>6</th><td class="g">123 Any property</td><td class="g text-center">FULL</td><td>John</td><td>Smith</td><td>john.smith</td><td class="text-end">4.16E+09</td><td class="text-end">########</td><td class="text-end">1/1/2024</td><td class="text-end">12/31/2024</td><td class="text-end">1/1/2025</td><td class="text-end">1/1/2024</td><td class="text-end">1200.5</td><td class="text-end">1200</td><td>PropertyManager</td></tr>
<tr><th>7</th><td class="b">West Tower</td><td class="b text-center">A</td><td>Emily</td><td>Johnson</td><td>emily.john</td><td class="text-end">6.48E+09</td><td class="text-end">########</td><td class="text-end">6/1/2024</td><td class="text-end">5/31/2025</td><td></td><td class="text-end">6/1/2024</td><td class="text-end">950</td><td class="text-end">950</td><td>PropertyManager</td></tr>
<tr><th>8</th><td class="b">West Tower</td><td class="b text-center">B</td><td>Michael</td><td>Brown</td><td>michael.br</td><td class="text-end">4.16E+09</td><td class="text-end">########</td><td class="text-end">9/1/2023</td><td class="text-end">8/31/2024</td><td class="text-end">9/1/2024</td><td class="text-end">9/1/2023</td><td class="text-end">1100</td><td class="text-end">1100</td><td>Owner</td></tr>
<tr><th>9</th><td class="b">West Tower</td><td class="b text-center">103</td><td>Jennifer</td><td>Davis</td><td>jennifer.da</td><td class="text-end">4.17E+09</td><td class="text-end">########</td><td class="text-end">3/15/2024</td><td class="text-end">3/14/2025</td><td></td><td class="text-end">3/15/2024</td><td class="text-end">1050.5</td><td class="text-end">1050</td><td>PropertyManager</td></tr>
<tr><th>10</th><td class="b">West Tower</td><td class="b text-center">104</td><td>Robert</td><td>Wilson</td><td>robert.wils</td><td class="text-end">6.48E+09</td><td class="text-end">9/5/1975</td><td class="text-end">12/1/2023</td><td class="text-end">11/30/2024</td><td class="text-end">12/1/2024</td><td class="text-end">12/1/2023</td><td class="text-end">1150</td><td class="text-end">1150</td><td>Owner</td></tr>
<tr><th>11</th><td class="o">123 Main St-John</td><td class="text-end">101</td><td>David</td><td>Taylor</td><td>david.taylo</td><td class="text-end">4.16E+09</td><td class="text-end">########</td><td class="text-end">2/1/2024</td><td class="text-end">1/31/2025</td><td></td><td class="text-end">2/1/2024</td><td class="text-end">1000</td><td class="text-end">1000</td><td>PropertyManager</td></tr>
<tr><th>12</th><td class="l">123 Main st-Lisa</td><td class="text-end">201</td><td>Sophia</td><td>Anderson</td><td>sophia.and</td><td class="text-end">4.16E+09</td><td class="text-end">########</td><td class="text-end">10/15/2023</td><td class="text-end">10/14/2024</td><td class="text-end">10/15/2024</td><td class="text-end">10/15/2023</td><td class="text-end">1200</td><td class="text-end">1200</td><td>Owner</td></tr>
<tr><th>13</th><td></td><td></td><td></td><td></td><td></td><td></td><td></td><td></td><td></td><td></td><td></td><td></td><td></td><td></td></tr>
<tr><th>14</th><td></td><td></td><td></td><td></td><td></td><td></td><td></td><td></td><td></td><td></td><td></td><td></td><td></td><td></td></tr>
<tr><th>15</th><td class="p bd" colspan="14">Enter your tenant data from following row</td></tr>
<tr><th>16</th><td></td><td></td><td></td><td></td><td></td><td></td><td></td><td></td><td></td><td></td><td></td><td></td><td></td><td></td></tr>
<tr><th>17</th><td></td><td></td><td></td><td></td><td></td><td></td><td></td><td></td><td></td><td></td><td></td><td></td><td></td><td></td></tr>
<tr><th>18</th><td></td><td></td><td></td><td></td><td></td><td></td><td></td><td></td><td></td><td></td><td></td><td></td><td></td><td></td></tr>
<tr><th>19</th><td></td><td></td><td></td><td></td><td></td><td></td><td></td><td></td><td></td><td></td><td></td><td></td><td></td><td></td></tr>
<tr><th>20</th><td></td><td></td><td></td><td></td><td></td><td></td><td></td><td></td><td></td><td></td><td></td><td></td><td></td><td></td></tr>
<tr><th>21</th><td></td><td></td><td></td><td></td><td></td><td></td><td></td><td></td><td></td><td></td><td></td><td></td><td></td><td></td></tr>
<tr><th>22</th><td></td><td></td><td></td><td></td><td></td><td></td><td></td><td></td><td></td><td></td><td></td><td></td><td></td><td></td></tr>
<tr><th>23</th><td></td><td></td><td></td><td></td><td></td><td></td><td></td><td></td><td></td><td></td><td></td><td></td><td></td><td></td></tr>
<tr><th>24</th><td></td><td></td><td></td><td></td><td></td><td></td><td></td><td></td><td></td><td></td><td></td><td></td><td></td><td></td></tr>
<tr><th>25</th><td></td><td></td><td></td><td></td><td></td><td></td><td></td><td></td><td></td><td></td><td></td><td></td><td></td><td></td></tr>
<tr><th>26</th><td></td><td></td><td></td><td></td><td></td><td></td><td></td><td></td><td></td><td></td><td></td><td></td><td></td><td></td></tr>
<tr class="r27"><th></th><td></td><td></td><td></td><td></td><td></td><td></td><td></td><td></td><td></td><td></td><td></td><td></td><td></td><td></td></tr>
</tbody>
</table>

<div class="hscroll d-flex">
  <div class="corner"></div>
  <div class="track d-flex align-items-center justify-content-between">
    <div class="thumb"></div>
    <svg width="9" height="10" viewBox="0 0 9 10"><path d="M0 0l9 5-9 5z" fill="#808080"/></svg>
  </div>
</div>
<div class="sheetbar d-flex align-items-center">
  <svg width="8" height="16" viewBox="0 0 8 16" fill="none" stroke="#ccc" stroke-width="1.200"><path d="M7 1L1 8l6 7"/></svg>
  <svg width="8" height="16" viewBox="0 0 8 16" fill="none" stroke="#ccc" stroke-width="1.200" style="margin-left:32px"><path d="M1 1l6 7-6 7"/></svg>
  <svg width="16" height="11" viewBox="0 0 16 11" stroke="#444" stroke-width="1.200" style="margin-left:28px"><path d="M0 1h16M0 5.500h16M0 10h16"/></svg>
  <div class="sheettab">mipp_tenant_bulk_upload_with_sa</div>
  <svg width="15" height="15" viewBox="0 0 15 15" stroke="#444" stroke-width="1.200" style="margin-left:25px"><path d="M7.500 0v15M0 7.500h15"/></svg>
</div>
<div class="status d-flex align-items-start">
  <span>Workbook Statistics</span>
  <svg class="ms-auto" width="18" height="12" viewBox="0 0 18 12" fill="none" stroke="#555"><rect x=".5" y=".5" width="17" height="11" rx="1.500"/><path d="M3 3.500h1M6 3.500h1M9 3.500h1M12 3.500h1M15 3.500h1" /></svg>
  <svg width="15" height="15" viewBox="0 0 15 15" fill="none" stroke="#555" style="margin-left:25px"><circle cx="7.500" cy="7.500" r="7"/></svg>
  <svg width="16" height="12" viewBox="0 0 16 12" fill="none" stroke="#555" style="margin-left:25px"><circle cx="2.500" cy="7" r="2"/><path d="M6 .5h9v6H9l-2 2V.5z"/></svg>
  <div class="zoombox d-flex align-items-center justify-content-center gap-2" style="margin-left:50px">100%<svg width="10" height="6" viewBox="0 0 10 6" fill="none" stroke="#444" stroke-width="1.200"><path d="M.7.7L5 5 9.300.7"/></svg></div>
  <svg width="10" height="10" viewBox="0 0 10 10" stroke="#555" style="margin-left:16px"><path d="M5 0v10"/></svg>
  <svg width="15" height="10" viewBox="0 0 15 10" fill="none" stroke="#555" style="margin-left:24px;margin-right:15px"><path d="M0 3V0h3M12 0h3v3"/></svg>
</div>

<div class="badge2 d-flex align-items-center justify-content-center">2</div>
<div class="avatarblur"></div>
<div class="blursq"></div>
<div class="pink"></div>
</div></div>
<script src="https://cdn.jsdelivr.net/npm/bootstrap@5.3.0/dist/js/bootstrap.bundle.min.js"></script>
</body>
</html>
